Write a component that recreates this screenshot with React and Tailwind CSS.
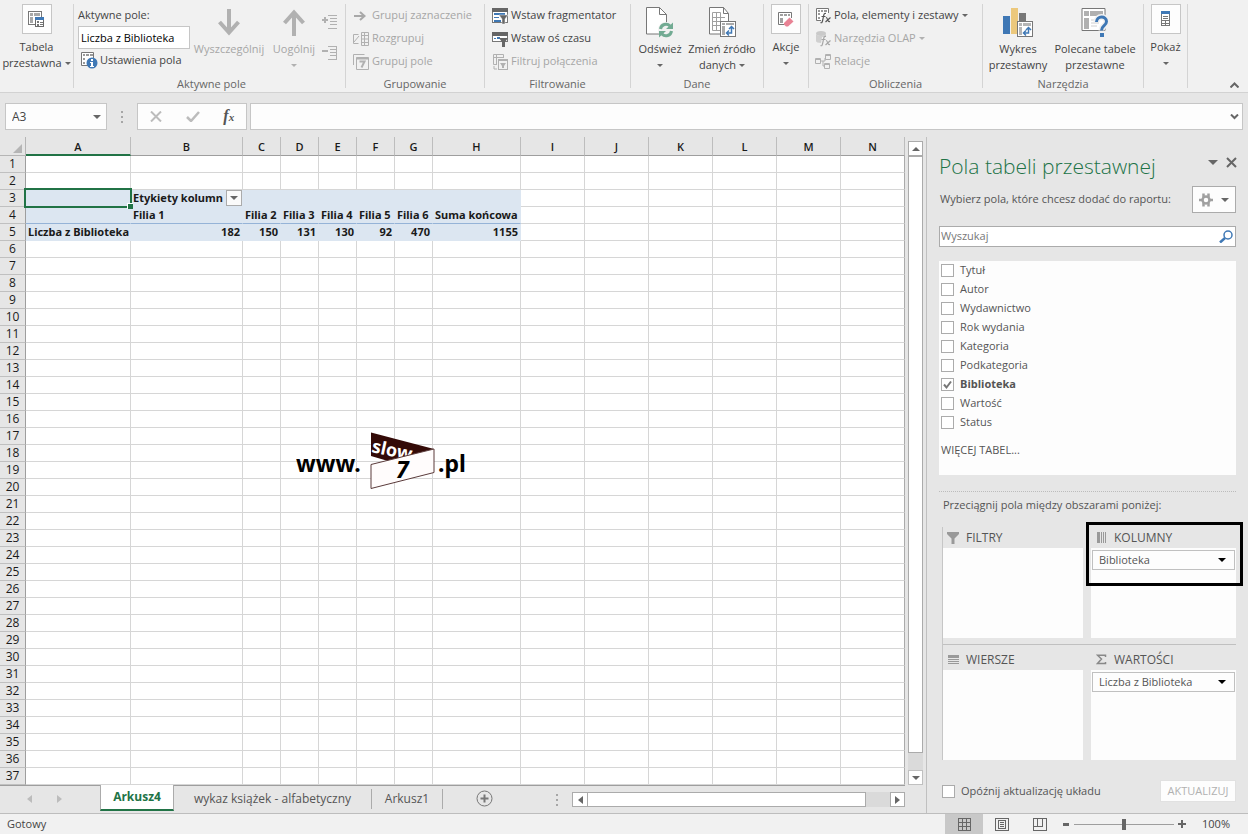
// src/App.jsx - Spreadsheet window with the pivot table field pane
const COLUMNS = [
  { name: 'A', width: 105 },
  { name: 'B', width: 112 },
  { name: 'C', width: 38 },
  { name: 'D', width: 38 },
  { name: 'E', width: 38 },
  { name: 'F', width: 38 },
  { name: 'G', width: 38 },
  { name: 'H', width: 88 },
  { name: 'I', width: 64 },
  { name: 'J', width: 64 },
  { name: 'K', width: 64 },
  { name: 'L', width: 64 },
  { name: 'M', width: 64 },
  { name: 'N' },
];

const ROWS = Array.from({ length: 37 }, (_, i) => i + 1);

const CELLS = {
  B3: 'Etykiety kolumn',
  B4: 'Filia 1',
  C4: 'Filia 2',
  D4: 'Filia 3',
  E4: 'Filia 4',
  F4: 'Filia 5',
  G4: 'Filia 6',
  H4: 'Suma końcowa',
  A5: 'Liczba z Biblioteka',
  B5: 182,
  C5: 150,
  D5: 131,
  E5: 130,
  F5: 92,
  G5: 470,
  H5: 1155,
};

const FIELDS = ['Tytuł', 'Autor', 'Wydawnictwo', 'Rok wydania', 'Kategoria', 'Podkategoria', 'Biblioteka', 'Wartość', 'Status'];

const Caret = ({ className = 'text-[#666]', w = 6, dir = 'down' }) => {
  const points = { down: '0,0 8,0 4,4', up: '0,4 8,4 4,0' };
  return (
    <svg width={w} height={w / 2} viewBox="0 0 8 4" className={`shrink-0 ${className}`}>
      <polygon points={points[dir]} fill="currentColor" />
    </svg>
  );
};

const SideCaret = ({ left, className = 'text-[#666]' }) => (
  <svg width="5" height="8" viewBox="0 0 5 8" className={className}>
    <polygon points={left ? '5,0 5,8 0,4' : '0,0 0,8 5,4'} fill="currentColor" />
  </svg>
);

const Dots = () => (
  <svg width="3" height="12" fill="#a6a6a6" shapeRendering="crispEdges">
    <rect y="0" width="2" height="2" />
    <rect y="5" width="2" height="2" />
    <rect y="10" width="2" height="2" />
  </svg>
);

/* ---------- ribbon icons ---------- */

const PivotIcon = () => (
  <svg width="17" height="17" shapeRendering="crispEdges">
    <rect x="0.5" y="0.5" width="13" height="13" fill="#fff" stroke="#777" />
    <path d="M2 2h3v3H2zM6 2h6v3H6zM2 6h3v6H2z" fill="#a8a8a8" />
    <rect x="7.5" y="6.5" width="8" height="9" fill="#fff" stroke="#6a6a6a" />
    <rect x="7" y="6" width="9" height="3" fill="#3f78b5" />
    <path d="M9 10h2v2H9zM12 11h3v1h-3zM9 13h2v2H9zM12 13h3v1h-3z" fill="#777" />
  </svg>
);

const FieldSettingsIcon = () => (
  <svg width="17" height="17">
    <path d="M.5 .5h12v13H.5z" fill="#fff" stroke="#777" />
    <path d="M2 2h2v2H2zM5 2h3v2H5zM9 2h3v2H9zM2 6h2v2H2zM2 10h2v2H2z" fill="#999" />
    <circle cx="11" cy="11" r="5.5" fill="#3f78b5" />
    <path d="M10 7h2v2h-2zM9 10h3v4h1v1H9v-1h1v-3H9z" fill="#fff" />
  </svg>
);

const BigArrow = ({ up }) => (
  <svg width="22" height="27" viewBox="0 0 22 27" fill="none" stroke="#b1b1b1" strokeWidth="4">
    {up ? <path d="M11 27V3M1.500 14L11 3.500 20.500 14" /> : <path d="M11 0v24M1.500 13L11 23.500 20.500 13" />}
  </svg>
);

const ExpandIcon = ({ minus }) => (
  <svg width="15" height="14" fill="none" stroke="#b1b1b1" shapeRendering="crispEdges">
    <path d="M0 5h6" strokeWidth="2" />
    {!minus && <path d="M3 2v6" strokeWidth="2" />}
    <path d="M6 .5h9M8 3.500h7M8 6.500h7M8 9.500h7M6 13.500h9" />
    {minus && <path d="M14.500 1v12" />}
  </svg>
);

const RightArrowIcon = () => (
  <svg width="16" height="16" fill="none" stroke="#a8a8a8" strokeWidth="2">
    <path d="M1 8h10M7 4l4.500 4L7 12" />
  </svg>
);

const UngroupIcon = () => (
  <svg width="16" height="16" fill="none" stroke="#b1b1b1">
    <path d="M5.500 3.500h-5v9h5M1 11l5-6M8.500 1.500h7v13h-7zM8 4.500h7M8 8h7M8 11.500h7M11.500 2v12" />
  </svg>
);

const GroupFieldIcon = () => (
  <svg width="16" height="16" fill="none" stroke="#b1b1b1">
    <path d="M.5 11V.5h11M3.500 3.500h12v12h-12z" />
    <path d="M3.500 4.500h12" strokeWidth="2" />
    <path d="M6.500 7.500h5l-3 6" strokeWidth="2" />
  </svg>
);

const SlicerIcon = () => (
  <svg width="17" height="16" shapeRendering="crispEdges">
    <rect x="0.500" y="0.500" width="15" height="14" fill="#fff" stroke="#777" />
    <rect width="16" height="4" fill="#666" />
    <path d="M2 5h11v2H2zM2 9h5v1H2zM2 12h7v2H2z" fill="#3f78b5" />
    <path d="M7 7h9l-3 4v5h-3v-5z" fill="#666" stroke="#f1f1f1" strokeWidth="0.500" shapeRendering="auto" />
  </svg>
);

const TimelineIcon = () => (
  <svg width="17" height="16" shapeRendering="crispEdges">
    <rect x="0.500" y="1.500" width="15" height="9" fill="#fff" stroke="#777" />
    <rect y="1" width="16" height="4" fill="#666" />
    <path d="M2 7h2v1H2zM5 6h3v2H5z" fill="#3f78b5" />
    <path d="M7 7h9l-3 4v5h-3v-5z" fill="#666" shapeRendering="auto" />
  </svg>
);

const FilterConnIcon = () => (
  <svg width="17" height="16" fill="none" stroke="#b1b1b1">
    <path d="M5 10.500H1.500v-10h10V4M1 3.500h10M4.500 1v9M2 12v3h3" />
    <rect x="6.500" y="5.500" width="9" height="10" />
    <path d="M6 6.500h10" />
    <path d="M8 9h6l-2 3v2h-2v-2z" fill="#b1b1b1" stroke="none" />
  </svg>
);

const RefreshIcon = () => (
  <svg width="30" height="32">
    <path d="M1.500 1.500h13l7 7v19.500h-20z" fill="#fff" stroke="#777" />
    <path d="M14.500 1.500v7h7" fill="none" stroke="#777" />
    <circle cx="21" cy="24" r="8" fill="#f1f1f1" />
    <path d="M15.500 23a5.500 5.500 0 0 1 9.500-3M26.500 25a5.500 5.500 0 0 1-9.500 3" fill="none" stroke="#72ab93" strokeWidth="3" />
    <path d="M28 16.500v6.500h-7zM14 31.500V25h7z" fill="#72ab93" />
  </svg>
);

const SourceIcon = () => (
  <svg width="29" height="32">
    <path d="M1.500 1.500h14l5 6V28h-19z" fill="#fff" stroke="#777" />
    <path d="M15.500 1.500v6h5" fill="none" stroke="#777" />
    <path d="M4.500 6.500h8v18h-8zM4 11.500h13M4 15.500h13M4 19.500h9M8.500 6v18M12.500 9v12" fill="none" stroke="#a0a0a0" />
    <rect x="12.500" y="15.500" width="15" height="15" fill="#fff" stroke="#777" />
    <path d="M14 17h3v2h-3zM18 17h8v2h-8zM14 20h3v9h-3z" fill="#aaa" />
    <path d="M19 27h4.500v-6M21 24.500L18.500 27l2.500 2.500M21 23l2.500-2.500L26 23" fill="none" stroke="#3f78b5" strokeWidth="1.500" />
  </svg>
);

const ActionsIcon = () => (
  <svg width="17" height="17">
    <path d="M13.500 7V1.500H.5v12H6" fill="#fff" stroke="#777" />
    <path d="M2 3h3v2H2zM6 3h3v2H6zM10 3h2v2h-2zM2 7h3v5H2z" fill="#a0a0a0" />
    <path d="M6 12l5.500-5.500 4 4L10 15.500H8L6 13.500z" fill="#e88294" />
  </svg>
);

const CalcFieldsIcon = () => (
  <svg width="17" height="17">
    <path d="M13.500 6V1.500H1.500v12H6" fill="#fff" stroke="#777" />
    <path d="M3 3h2v2H3zM6 3h2v2H6zM9 3h3v2H9zM3 6h2v2H3zM3 10h2v2H3z" fill="#999" />
    <path d="M11 6.500c-2-.5-2 .5-2.500 3L7.500 14c-.5 2-1 2-2 1.500M6.500 9.500h4M11 10.500c1.500-.5 1.500 5 4 4M15.500 10.500L10.500 15" fill="none" stroke="#555" strokeWidth="1.200" />
  </svg>
);

const OlapIcon = () => (
  <svg width="17" height="17">
    <ellipse cx="6" cy="3.500" rx="5" ry="2.500" fill="#c9c9c9" />
    <path d="M1 4c1 2.500 9 2.500 10 0v3H7l-1 6c-3 0-5-1-5-2z" fill="#d0d0d0" />
    <path d="M11 6.500c-2-.5-2 .5-2.500 3L7.500 14c-.5 2-1 2-2 1.500M6.500 9.500h4M11 10.500c1.500-.5 1.500 5 4 4M15.500 10.500L10.500 15" fill="none" stroke="#a6a6a6" strokeWidth="1.200" />
  </svg>
);

const RelationsIcon = () => (
  <svg width="17" height="17" fill="none" stroke="#b1b1b1">
    <path d="M.5 5.500h5v5h-5zM10.500 1.500h5v5h-5zM9.500 10.500h5v5h-5zM6 8h4V5M8 8v5h2" />
    <path d="M0 6.500h6M10 2.500h6M9 11.500h6" />
  </svg>
);

const PivotChartIcon = () => (
  <svg width="31" height="30" shapeRendering="crispEdges">
    <rect y="9" width="7" height="18" fill="#3f78b5" />
    <rect x="8" y="1" width="7" height="26" fill="#ecc87c" />
    <rect x="16" y="6" width="7" height="9" fill="#777" />
    <rect x="14.500" y="14.500" width="15" height="15" fill="#fff" stroke="#777" />
    <path d="M16 16h3v3h-3zM20 16h8v3h-8zM16 20h3v8h-3z" fill="#b5b5b5" />
    <path d="M21 26h4.500v-5M23 23.500L20.500 26l2.500 2.500M23 23l2.500-2.500L28 23" fill="none" stroke="#3f78b5" strokeWidth="1.500" shapeRendering="auto" />
  </svg>
);

const RecommendedIcon = () => (
  <svg width="29" height="30">
    <path d="M1 1.500h23v22H1z" fill="#fff" stroke="#777" />
    <path d="M3 4h5v5H3zM9 4h13v5H9zM3 11h5v11H3z" fill="#b0b0b0" />
    <path d="M10 13h8M10 16h8M10 19h6" stroke="#d0d0d0" />
    <path d="M15.500 15c0-6.500 10-6.500 10-.5 0 4.500-5 4-5 9" fill="none" stroke="#f1f1f1" strokeWidth="6" />
    <path d="M15.500 15c0-6.500 10-6.500 10-.5 0 4.500-5 4-5 9" fill="none" stroke="#3f78b5" strokeWidth="3" />
    <rect x="19" y="26" width="4" height="4" fill="#3f78b5" />
  </svg>
);

const ShowIcon = () => (
  <svg width="10" height="16" fill="none" shapeRendering="crispEdges">
    <rect x="0.500" y="0.500" width="8" height="14" fill="#fff" stroke="#777" />
    <path d="M0 0h9v3H0z" fill="#3f78b5" />
    <path d="M2 5.500h5M2 7.500h5M1 9.500h7M1 12.500h7M4.500 10v5" stroke="#777" />
  </svg>
);

/* ---------- ribbon ---------- */

const Group = ({ label, className = '', children }) => (
  <section className={`flex shrink-0 flex-col border-r border-[#d4d4d4] ${className}`}>
    <div className="flex h-[72px]">{children}</div>
    <h2 className="h-3 text-center leading-4 text-[#666]">{label}</h2>
  </section>
);

const SmallButton = ({ icon, disabled, caret, children }) => (
  <button disabled={disabled} className={`flex h-[23px] items-center gap-[3px] whitespace-nowrap ${disabled ? 'text-[#a6a6a6]' : 'text-[#444]'}`}>
    <span className="w-4 shrink-0">{icon}</span>
    {children}
    {caret && <Caret className={disabled ? 'text-[#b1b1b1]' : 'text-[#666]'} />}
  </button>
);

const BoxButton = ({ icon, children }) => (
  <button className="flex w-full flex-col items-center leading-4">
    <span className="mb-[5px] flex h-[30px] w-[30px] items-center justify-center border border-[#c6c6c6] bg-[#fdfdfd]">{icon}</span>
    {children}
  </button>
);

const BigButton = ({ icon, disabled, className = '', children }) => (
  <button disabled={disabled} className={`flex flex-col items-center whitespace-nowrap leading-4 ${disabled ? 'text-[#a6a6a6]' : ''} ${className}`}>
    <span className="flex h-[37px] items-center pb-px">{icon}</span>
    {children}
  </button>
);

const CaretLine = ({ className }) => (
  <span className="flex h-4 items-center">
    <Caret className={className} />
  </span>
);

const Ribbon = () => (
  <header className="flex border-b border-[#d2d2d2] bg-[#f1f1f1] pt-1 pb-1">
    <div className="flex min-w-0 flex-1">
      <Group className="w-[74px]">
        <BoxButton icon={<PivotIcon />}>
          <span>Tabela</span>
          <span className="flex items-center gap-[3px]">
            przestawna <Caret />
          </span>
        </BoxButton>
      </Group>
      <Group label="Aktywne pole" className="w-[272px] pl-1">
        <div className="w-28 shrink-0">
          <label htmlFor="active-field" className="block h-[22px] leading-[22px]">Aktywne pole:</label>
          <input id="active-field" defaultValue="Liczba z Biblioteka" className="block h-[23px] w-full border border-[#c6c6c6] bg-white px-0.5 text-black outline-none" />
          <div className="pl-[3px]">
            <SmallButton icon={<FieldSettingsIcon />}>Ustawienia pola</SmallButton>
          </div>
        </div>
        <BigButton icon={<BigArrow />} disabled className="w-[78px]">Wyszczególnij</BigButton>
        <BigButton icon={<BigArrow up />} disabled className="w-[52px]">
          Uogólnij
          <CaretLine className="text-[#b1b1b1]" />
        </BigButton>
        <div className="flex flex-col gap-[17px] pt-[11px] pl-0.5">
          <button disabled aria-label="Rozwiń"><ExpandIcon /></button>
          <button disabled aria-label="Zwiń"><ExpandIcon minus /></button>
        </div>
      </Group>
      <Group label="Grupowanie" className="w-[139px]">
        <div className="pl-[7px]">
          <SmallButton disabled icon={<RightArrowIcon />}>Grupuj zaznaczenie</SmallButton>
          <SmallButton disabled icon={<UngroupIcon />}>Rozgrupuj</SmallButton>
          <SmallButton disabled icon={<GroupFieldIcon />}>Grupuj pole</SmallButton>
        </div>
      </Group>
      <Group label="Filtrowanie" className="w-[146px]">
        <div className="pl-[7px]">
          <SmallButton icon={<SlicerIcon />}>Wstaw fragmentator</SmallButton>
          <SmallButton icon={<TimelineIcon />}>Wstaw oś czasu</SmallButton>
          <SmallButton disabled icon={<FilterConnIcon />}>Filtruj połączenia</SmallButton>
        </div>
      </Group>
      <Group label="Dane" className="w-[133px] px-1">
        <BigButton icon={<RefreshIcon />} className="w-[50px]">
          Odśwież
          <CaretLine />
        </BigButton>
        <BigButton icon={<SourceIcon />} className="w-[74px]">
          Zmień źródło
          <span className="flex items-center gap-[3px]">
            danych <Caret />
          </span>
        </BigButton>
      </Group>
      <Group className="w-[45px]">
        <BoxButton icon={<ActionsIcon />}>
          Akcje
          <CaretLine />
        </BoxButton>
      </Group>
      <Group label="Obliczenia" className="w-[174px]">
        <div className="pl-[6px]">
          <SmallButton caret icon={<CalcFieldsIcon />}>Pola, elementy i zestawy</SmallButton>
          <SmallButton caret disabled icon={<OlapIcon />}>Narzędzia OLAP</SmallButton>
          <SmallButton disabled icon={<RelationsIcon />}>Relacje</SmallButton>
        </div>
      </Group>
      <Group label="Narzędzia" className="w-[161px]">
        <BigButton icon={<PivotChartIcon />} className="w-[70px]">
          Wykres
          <span>przestawny</span>
        </BigButton>
        <BigButton icon={<RecommendedIcon />} className="w-[84px]">
          Polecane tabele
          <span>przestawne</span>
        </BigButton>
      </Group>
      <Group className="w-[44px]">
        <BoxButton icon={<ShowIcon />}>
          Pokaż
          <CaretLine />
        </BoxButton>
      </Group>
    </div>
    <button aria-label="Zwiń wstążkę" className="self-end px-[9px]">
      <svg width="9" height="6" fill="none" stroke="#666" strokeWidth="2">
        <path d="M0.500 5.500l4-4 4 4" />
      </svg>
    </button>
  </header>
);

const FormulaBar = () => (
  <div className="flex h-[44px] items-start bg-[#e6e6e6] px-[5px] pt-[10px] pb-[7px]">
    <div className="flex h-[27px] w-[102px] items-center border border-[#c6c6c6] bg-[#fdfdfd] pr-[5px] pl-[6px]">
      <input aria-label="Pole nazwy" defaultValue="A3" className="min-w-0 flex-1 bg-transparent text-xs outline-none" />
      <Caret w={8} />
    </div>
    <div className="flex h-[27px] w-[30px] items-center justify-center">
      <Dots />
    </div>
    <div className="flex h-[27px] w-[110px] items-center justify-around border border-[#c6c6c6] bg-[#fdfdfd]">
      <button aria-label="Anuluj">
        <svg width="12" height="11" stroke="#bcbcbc" strokeWidth="2">
          <path d="M1 0.500l10 10M11 .5L1 10.500" />
        </svg>
      </button>
      <button aria-label="Wpis">
        <svg width="14" height="11" fill="none" stroke="#bcbcbc" strokeWidth="2.500">
          <path d="M1 6l4 4 8-9" />
        </svg>
      </button>
      <button className="font-['Liberation_Serif',serif] text-base font-bold leading-4 text-[#555] italic" aria-label="Wstaw funkcję">
        f<span className="text-[11px]">x</span>
      </button>
    </div>
    <div className="ml-[3px] flex h-[27px] min-w-0 flex-1 items-center border border-[#c6c6c6] bg-[#fdfdfd] pr-[3px] pl-2">
      <input aria-label="Pasek formuły" className="min-w-0 flex-1 bg-transparent outline-none" />
      <svg width="9" height="6" fill="none" stroke="#666" strokeWidth="2">
        <path d="M1 .5l3.500 3.500L8 .5" />
      </svg>
    </div>
  </div>
);

/* ---------- sheet ---------- */

const cellClass = (col, row) => {
  const inPivot = row >= 3 && row <= 5 && col <= 'H';
  if (!inPivot) return 'border-[#d6d6d6] bg-white';
  if (row === 4) return 'border-r-[#dce6f1] border-b-[#95b3d7] bg-[#dce6f1]';
  return 'border-[#dce6f1] bg-[#dce6f1]';
};

const Cell = ({ col, row }) => {
  const value = CELLS[`${col}${row}`];
  const numeric = typeof value === 'number';
  return (
    <td className={`relative border-r border-b px-0.5 whitespace-nowrap last:border-r-[#ababab] ${numeric ? 'text-right' : ''} ${cellClass(col, row)}`}>
      {value}
      {col === 'A' && row === 3 && (
        <span className="absolute -top-0.5 -left-0.5 z-10 h-5 w-[108px] border-2 border-[#217346]">
          <span className="absolute -right-[3px] -bottom-[3px] h-[6px] w-[6px] border-t border-l border-white bg-[#217346]" />
        </span>
      )}
      {col === 'B' && row === 3 && (
        <button aria-label="Filtr kolumn" className="absolute top-0 right-0 flex h-4 w-4 items-center justify-center border border-[#ababab] bg-[#fafafa]">
          <Caret w={8} />
        </button>
      )}
    </td>
  );
};

const Watermark = () => (
  <svg width="176" height="60" className="pointer-events-none absolute top-[295px] left-[296px] z-10" fontFamily="'Noto Sans', sans-serif" fontWeight="700">
    <defs>
      <clipPath id="dark-band">
        <path d="M75 0l62 16.500-46 12.500L75 24z" />
      </clipPath>
    </defs>
    <text x="0" y="40" fontSize="23">www.</text>
    <path d="M75 .5l63 16.500-46 12-17-5z" fill="#330a07" />
    <g clipPath="url(#dark-band)">
      <text x="75" y="20" fontSize="18" fill="#fff" transform="rotate(12 75 20)">slow</text>
    </g>
    <path d="M75 32.500L138 17v23.500L75 56.500z" fill="#fffcfc" stroke="#5a3a3a" />
    <text x="100" y="46" fontSize="23" fontStyle="italic">7</text>
    <text x="142" y="40" fontSize="23">.pl</text>
  </svg>
);

const Sheet = () => (
  <div className="relative min-w-0 flex-1 overflow-hidden">
    <table className="w-full table-fixed border-separate border-spacing-0 font-['Noto_Sans',sans-serif] text-[11px] leading-4 font-bold text-[#1a1a1a]">
      <colgroup>
        <col style={{ width: 26 }} />
        {COLUMNS.map((c) => (
          <col key={c.name} style={{ width: c.width }} />
        ))}
      </colgroup>
      <thead>
        <tr className="h-[19px] bg-[#e6e6e6] font-['Open_Sans',sans-serif]">
          <th className="border-r border-b border-[#b5b5b5]">
            <svg width="9" height="9" className="mt-1 ml-auto mr-[3px]">
              <path d="M9 0v9H0z" fill="#b5b5b5" />
            </svg>
          </th>
          {COLUMNS.map((c) => (
            <th key={c.name} scope="col" className={`border-r border-r-[#bdbdbd] pt-0.5 leading-[14px] font-semibold ${c.name === 'A' ? 'border-b-2 border-b-[#217346]' : 'border-b border-b-[#9e9e9e]'}`}>
              {c.name}
            </th>
          ))}
        </tr>
      </thead>
      <tbody>
        {ROWS.map((row) => (
          <tr key={row} className="h-[17px]">
            <th scope="row" className="border-r border-b border-r-[#9e9e9e] border-b-[#c0c0c0] bg-[#e6e6e6] font-['Open_Sans',sans-serif] text-xs leading-4 font-medium">
              {row}
            </th>
            {COLUMNS.map((c) => (
              <Cell key={c.name} col={c.name} row={row} />
            ))}
          </tr>
        ))}
      </tbody>
    </table>
    <Watermark />
  </div>
);

const VerticalScrollbar = () => (
  <div className="flex w-[21px] flex-col px-[3px] pt-1">
    <button aria-label="W górę" className="flex h-[15px] items-center justify-center border border-[#ababab] bg-white">
      <Caret dir="up" w={8} />
    </button>
    <div className="flex flex-1 flex-col bg-[#dadada]">
      <div className="h-[597px] border border-[#ababab] bg-white" />
    </div>
    <button aria-label="W dół" className="flex h-[15px] items-center justify-center border border-[#c0c0c0] bg-white">
      <Caret w={8} />
    </button>
  </div>
);

const SheetTabs = () => (
  <div className="mr-[21px] flex h-[28px] items-start border-t border-[#9e9e9e] text-xs text-[#555]">
    <div className="flex h-[26px] w-[100px] items-center gap-[25px] pl-[27px]">
      <SideCaret left className="text-[#bcbcbc]" />
      <SideCaret className="text-[#bcbcbc]" />
    </div>
    <button className="relative -mt-px h-[26px] w-[74px] border-x border-b-2 border-x-[#ababab] border-b-[#217346] bg-white font-bold text-[#217346]">Arkusz4</button>
    <button className="mt-[3px] h-5 w-[198px] border-r border-[#ababab] whitespace-nowrap">wykaz książek - alfabetyczny</button>
    <button className="mt-[3px] h-5 w-[71px] border-r border-[#ababab]">Arkusz1</button>
    <button aria-label="Nowy arkusz" className="mt-1 ml-[33px]">
      <svg width="17" height="17" fill="none" stroke="#777">
        <circle cx="8.500" cy="8.500" r="7.500" />
        <path d="M8.500 4.500v8M4.500 8.500h8" strokeWidth="2" />
      </svg>
    </button>
    <div className="mt-2 ml-auto">
      <Dots />
    </div>
    <div className="mt-[6px] ml-[13px] flex h-[15px] w-[333px] bg-[#dadada]">
      <button aria-label="W lewo" className="flex w-4 items-center justify-center border border-[#ababab] bg-white">
        <SideCaret left />
      </button>
      <div className="-ml-px w-[279px] border border-[#ababab] bg-white" />
      <button aria-label="W prawo" className="ml-auto flex w-[15px] items-center justify-center border border-[#ababab] bg-white">
        <SideCaret />
      </button>
    </div>
  </div>
);

/* ---------- field pane ---------- */

const Checkbox = ({ label, checked, className = '' }) => (
  <label className={`flex h-[19px] items-center ${className}`}>
    <span className="relative mr-[6px] h-[13px] w-[13px]">
      <input type="checkbox" defaultChecked={checked} className="peer block h-[13px] w-[13px] appearance-none border border-[#ababab] bg-white" />
      <svg width="13" height="13" className="pointer-events-none absolute top-0 left-0 hidden peer-checked:block" fill="none" stroke="#777" strokeWidth="2">
        <path d="M3 6.500l2.500 3L10 3.500" />
      </svg>
    </span>
    <span className={checked ? 'font-bold' : ''}>{label}</span>
  </label>
);

const areaIcons = {
  FILTRY: (
    <svg width="12" height="12">
      <path d="M0 0h12v2L7.500 6.500V12h-3V6.500L0 2z" fill="#999" />
    </svg>
  ),
  KOLUMNY: (
    <svg width="11" height="11" shapeRendering="crispEdges" fill="#999">
      <path d="M1 0h3v11H1zM5 0h1v11H5zM7 0h1v11H7zM9 0h1v11H9z" />
    </svg>
  ),
  WIERSZE: (
    <svg width="11" height="11" shapeRendering="crispEdges" fill="#999">
      <path d="M0 1h11v3H0zM0 5h11v1H0zM0 7h11v1H0zM0 9h11v1H0z" />
    </svg>
  ),
  WARTOŚCI: (
    <svg width="11" height="11" fill="none" stroke="#888" strokeWidth="1.500">
      <path d="M9.500 3V1.200H1.500L5.500 5 1.500 9.500h8V8" />
    </svg>
  ),
};

const Area = ({ name, item, className = '' }) => (
  <div className={`flex flex-col ${className}`}>
    <h3 className="flex h-[21px] items-center gap-[7px] pl-1 text-xs leading-5">
      <span className="flex w-3 justify-center">{areaIcons[name]}</span>
      {name}
    </h3>
    <div className="h-[90px] bg-[#fdfdfd] px-px pt-0.5">
      {item && (
        <button className="flex h-5 w-full items-center justify-between border border-[#c0c0c0] bg-[#fdfdfd] pr-2 pl-[6px]">
          {item}
          <Caret w={8} className="text-black" />
        </button>
      )}
    </div>
  </div>
);

const FieldPane = () => (
  <aside className="flex w-[322px] shrink-0 flex-col border-l border-[#c0c0c0] pr-3 pl-3 text-[#555]">
    <div className="flex h-[46px] items-start justify-between pt-3">
      <h1 className="pt-px font-['Open_Sans',sans-serif] text-[21px] leading-8 font-light text-[#217346]">Pola tabeli przestawnej</h1>
      <div className="-mr-0.5 flex items-center gap-[7px] pt-2">
        <button aria-label="Opcje okienka"><Caret w={10} /></button>
        <button aria-label="Zamknij">
          <svg width="13" height="11" stroke="#666" strokeWidth="2">
            <path d="M2 1l9 9M11 1L2 10" />
          </svg>
        </button>
      </div>
    </div>
    <div className="mt-[3px] flex h-[27px] items-center justify-between pl-px">
      <p>Wybierz pola, które chcesz dodać do raportu:</p>
      <button aria-label="Narzędzia" className="flex h-[27px] w-[44px] items-center justify-center gap-2 border border-[#ababab] bg-[#fdfdfd]">
        <svg width="14" height="14" fill="none" stroke="#a0a0a0">
          <circle cx="7" cy="7" r="3.500" strokeWidth="2.500" />
          <path d="M4.500 .5v4M9.500 .5v4M4.500 9.500v4M9.500 9.500v4M0 7h3M11 7h3" strokeWidth="2.500" />
        </svg>
        <Caret w={8} />
      </button>
    </div>
    <div className="mt-[13px] flex h-[21px] items-center border border-[#ababab] bg-white pr-[2px] pl-[1px]">
      <input aria-label="Wyszukaj" placeholder="Wyszukaj" className="min-w-0 flex-1 bg-transparent outline-none placeholder:text-[#777]" />
      <svg width="14" height="13" fill="none" stroke="#3f78b5">
        <circle cx="9" cy="5" r="4" strokeWidth="1.500" />
        <path d="M6 8l-5 4.500" strokeWidth="2.500" />
      </svg>
    </div>
    <div className="mt-[14px] h-[214px] bg-[#fdfdfd] pl-0.5">
      {FIELDS.map((f) => (
        <Checkbox key={f} label={f} checked={f === 'Biblioteka'} />
      ))}
      <a href="#wiecej" className="mt-2 block leading-5">WIĘCEJ TABEL...</a>
    </div>
    <div className="mt-4 border-t border-dotted border-[#bcbcbc]" />
    <p className="mt-[3px] pl-1 leading-5">Przeciągnij pola między obszarami poniżej:</p>
    <div className="relative mt-3 ml-[3px] border-l border-[#c6c6c6]">
      <div className="grid grid-cols-[140px_1fr] gap-x-2 border-b border-[#c0c0c0] pb-[6px]">
        <Area name="FILTRY" />
        <Area name="KOLUMNY" item="Biblioteka" />
      </div>
      <div className="grid grid-cols-[140px_1fr] gap-x-2 pt-1">
        <Area name="WIERSZE" />
        <Area name="WARTOŚCI" item="Liczba z Biblioteka" />
      </div>
      <div className="pointer-events-none absolute -top-[5px] -right-[7px] h-[64px] w-[157px] border-3 border-black" />
    </div>
    <div className="mt-5 flex h-[22px] items-center justify-between pl-[3px]">
      <Checkbox label="Opóźnij aktualizację układu" />
      <button disabled className="h-[22px] w-[76px] border border-[#e1e1e1] bg-[#fdfdfd] text-[#b1b1b1]">AKTUALIZUJ</button>
    </div>
  </aside>
);

const StatusBar = () => (
  <footer className="flex h-[21px] items-center border-t border-[#bdbdbd] bg-[#f1f1f1] pr-[18px] pl-[7px]">
    <span className="flex-1">Gotowy</span>
    <button aria-label="Normalny" className="flex h-5 w-[38px] items-center justify-center bg-[#c8c8c8]">
      <svg width="13" height="13" fill="none" stroke="#666" shapeRendering="crispEdges">
        <path d="M.5 .5h12v12H.5zM4.500 0v13M8.500 0v13M0 4.500h13M0 8.500h13" />
      </svg>
    </button>
    <button aria-label="Układ strony" className="flex h-5 w-[38px] items-center justify-center">
      <svg width="14" height="13" fill="none" stroke="#666" shapeRendering="crispEdges">
        <path d="M.5 .5h13v12H.5zM3.500 2.500h7v8h-7zM5 4.500h4M5 6.500h4M5 8.500h4" />
      </svg>
    </button>
    <button aria-label="Podgląd podziału stron" className="flex h-5 w-[38px] items-center justify-center">
      <svg width="14" height="13" fill="none" stroke="#666" shapeRendering="crispEdges">
        <path d="M.5 .5h13v12H.5zM4.500 1v7M9.500 1v7M1 8.500h9" />
      </svg>
    </button>
    <button aria-label="Pomniejsz" className="ml-1">
      <svg width="7" height="9" shapeRendering="crispEdges"><path d="M0 3h6v3H0z" fill="#666" /></svg>
    </button>
    <input
      type="range"
      aria-label="Powiększenie"
      defaultValue="50"
      className="mx-1 h-5 w-[100px] appearance-none bg-transparent [&::-webkit-slider-runnable-track]:h-px [&::-webkit-slider-runnable-track]:bg-[#9e9e9e] [&::-webkit-slider-thumb]:-mt-[5px] [&::-webkit-slider-thumb]:h-[11px] [&::-webkit-slider-thumb]:w-1 [&::-webkit-slider-thumb]:appearance-none [&::-webkit-slider-thumb]:bg-[#666]"
    />
    <button aria-label="Powiększ">
      <svg width="8" height="8" shapeRendering="crispEdges"><path d="M0 3h3V0h2v3h3v2H5v3H3V5H0z" fill="#666" /></svg>
    </button>
    <span className="ml-4">100%</span>
  </footer>
);

export default function App() {
  return (
    <div className="flex min-h-screen flex-col bg-[#e6e6e6] font-['Open_Sans',sans-serif] text-[11px] text-[#444]">
      <Ribbon />
      <FormulaBar />
      <main className="flex">
        <div className="min-w-0 flex-1">
          <div className="flex">
            <Sheet />
            <VerticalScrollbar />
          </div>
          <SheetTabs />
        </div>
        <FieldPane />
      </main>
      <StatusBar />
    </div>
  );
}
